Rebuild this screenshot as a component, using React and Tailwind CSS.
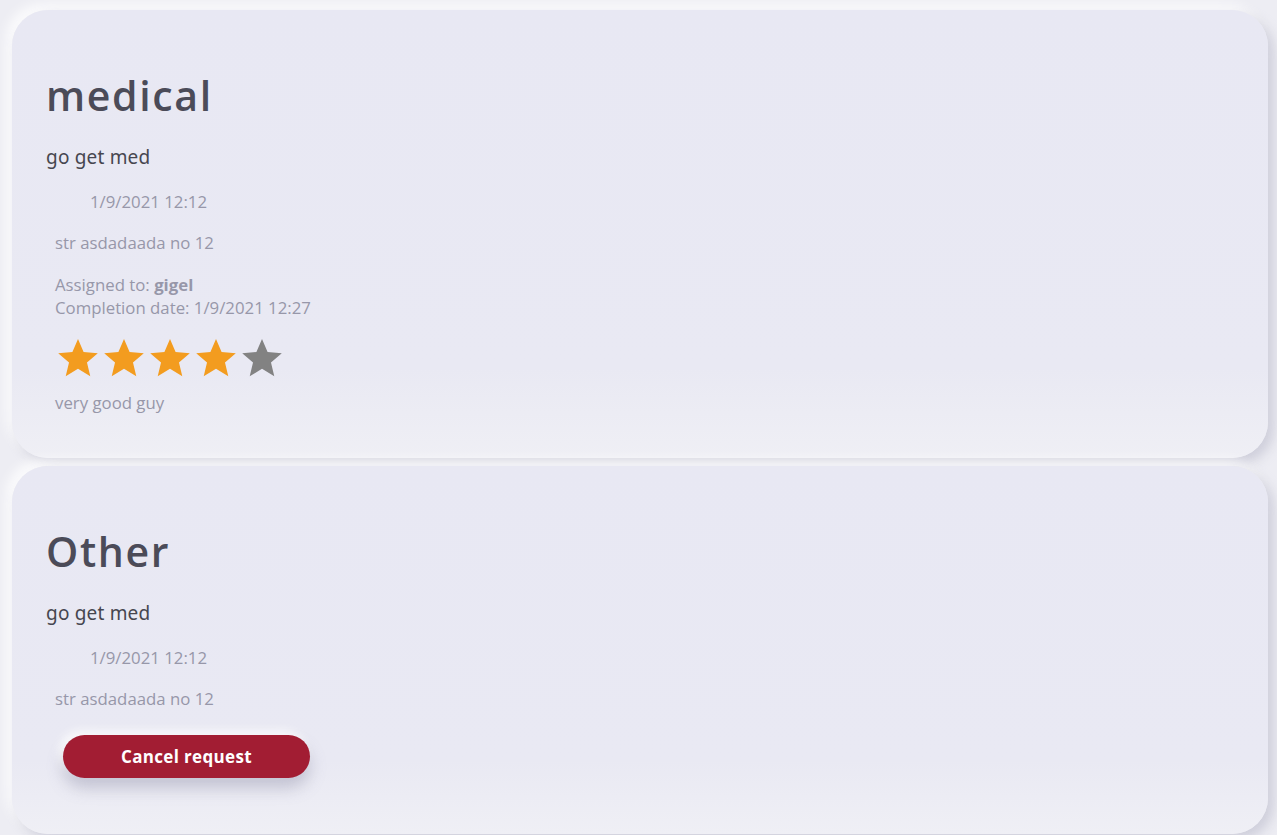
const REQUESTS = [
  {
    title: "medical",
    description: "go get med",
    date: "1/9/2021 12:12",
    address: "str asdadaada no 12",
    assignedTo: "gigel",
    completion: "1/9/2021 12:27",
    rating: 4,
    review: "very good guy",
  },
  {
    title: "Other",
    description: "go get med",
    date: "1/9/2021 12:12",
    address: "str asdadaada no 12",
    cancellable: true,
  },
];

function Star({ filled }) {
  return (
    <svg viewBox="0 0 24 24" className="h-[44px] w-[46px]">
      <path
        d="M12 1.6l3.05 7.15 7.75.62-5.9 5.06 1.8 7.57L12 17.93 5.3 22l1.8-7.57-5.9-5.06 7.75-.62z"
        fill={filled ? "#f39c1f" : "#828282"}
      />
    </svg>
  );
}

function RequestCard({ item }) {
  return (
    <div className="rounded-[36px] bg-[linear-gradient(180deg,#e8e8f3_0%,#e9e9f3_80%,#efeff5_100%)] px-[34px] pb-[44px] pt-[61px] shadow-[6px_6px_12px_rgba(170,170,190,0.45),-6px_-6px_12px_rgba(255,255,255,0.8)]">
      <h2 className="font-['Open_Sans',sans-serif] text-[41px] font-semibold leading-[48px] tracking-[0.04em] text-[#4b4b58]">
        {item.title}
      </h2>

      <p className="mt-[26px] font-['Noto_Sans',sans-serif] text-[19px] leading-[24px] tracking-[0.01em] text-[#46464f]">
        {item.description}
      </p>

      <div className="font-['Open_Sans',sans-serif] text-[16.8px] text-[#9797a9]">
        <p className="mt-[22px] pl-[44px] leading-[22px]">{item.date}</p>
        <p className="mt-[19px] pl-[9px] leading-[22px]">{item.address}</p>

        {item.assignedTo && (
          <div className="mt-[19px] pl-[9px] leading-[23px]">
            <p>
              Assigned to: <span className="font-bold">{item.assignedTo}</span>
            </p>
            <p>Completion date: {item.completion}</p>
          </div>
        )}

        {item.rating && (
          <div className="mt-[17px] flex pl-[9px]">
            {[1, 2, 3, 4, 5].map((n) => (
              <Star key={n} filled={n <= item.rating} />
            ))}
          </div>
        )}

        {item.review && (
          <p className="mt-[12px] pl-[9px] leading-[22px]">{item.review}</p>
        )}
      </div>

      {item.cancellable && (
        <button className="mb-[12px] ml-[17px] mt-[25px] h-[43px] w-[247px] rounded-full bg-[#a21d33] font-['Open_Sans',sans-serif] text-[17px] font-bold tracking-[0.02em] text-white shadow-[0_10px_16px_rgba(120,120,150,0.35),-4px_-4px_10px_rgba(255,255,255,0.9)]">
          Cancel request
        </button>
      )}
    </div>
  );
}

export default function App() {
  return (
    <div className="min-h-screen bg-[#ededf3] pl-[12px] pr-[9px] pt-[10px]">
      <div className="flex flex-col gap-[8px]">
        {REQUESTS.map((item) => (
          <RequestCard key={item.title} item={item} />
        ))}
      </div>
    </div>
  );
}
